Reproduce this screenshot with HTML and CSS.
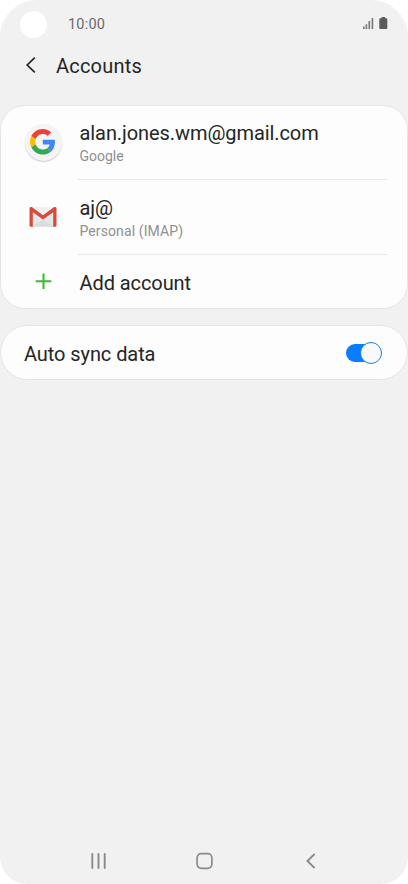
FILE: index.html
```html
<!DOCTYPE html>
<html lang="en">
<head>
<meta charset="utf-8">
<title>Accounts</title>
<link rel="stylesheet" href="styles.css">
</head>
<body>
<div class="phone">
  <div class="status">
    <span class="camera"></span>
    <span class="clock">10:00</span>
    <svg class="status-icons" width="28" height="16" viewBox="0 0 28 16">
      <g fill="#777"><rect x="1" y="10.5" width="1.6" height="2.5"/><rect x="3.6" y="8.3" width="1.6" height="4.7"/><rect x="6.5" y="5" width="1.6" height="8"/><rect x="9.6" y="2" width="1.6" height="11"/></g>
      <path d="M19.6 1h3.5v1.2h1.3q.9 0 .9.9v9q0 .9-.9.9h-6.2q-.9 0-.9-.9v-9q0-.9.9-.9h1.4z" fill="#5c5c5c"/>
    </svg>
  </div>
  <header class="header">
    <svg class="back" width="12" height="18" viewBox="0 0 12 18"><path d="M9.8 1.700 2.200 9l7.600 7.400" fill="none" stroke="#252525" stroke-width="1.700"/></svg>
    <h1 class="title">Accounts</h1>
  </header>
  <main>
    <section class="card accounts">
      <div class="row">
        <div class="icon"><div class="google">
          <svg width="25.500" height="25.500" viewBox="0 0 48 48"><path fill="#ea4335" d="M24 9.500c3.540 0 6.710 1.220 9.210 3.600l6.850-6.850C35.900 2.380 30.470 0 24 0 14.620 0 6.510 5.380 2.560 13.220l7.980 6.190C12.430 13.720 17.740 9.500 24 9.500z"/><path fill="#4285f4" d="M46.980 24.550c0-1.570-.15-3.090-.38-4.550H24v9.020h12.940c-.58 2.960-2.260 5.480-4.780 7.180l7.730 6c4.510-4.180 7.090-10.360 7.090-17.650z"/><path fill="#fbbc05" d="M10.530 28.590a14.500 14.500 0 0 1 0-9.180l-7.980-6.190a24 24 0 0 0 0 21.560z"/><path fill="#34a853" d="M24 48c6.480 0 11.930-2.130 15.890-5.810l-7.730-6c-2.150 1.450-4.920 2.300-8.160 2.300-6.260 0-11.570-4.220-13.470-9.910l-7.980 6.190C6.510 42.620 14.620 48 24 48z"/></svg>
        </div></div>
        <div class="body">
          <span class="label email">alan.jones.wm@gmail.com</span>
          <span class="sub google-sub">Google</span>
        </div>
      </div>
      <div class="row">
        <div class="icon">
          <svg width="28" height="22" viewBox="0 0 28 22">
            <path d="M2 1h24v19.800H2z" fill="#e7e7e7"/>
            <path d="M2 20.800 14 14l12 6.800z" fill="#dcdcdc"/>
            <path d="M2 1h24L14 11z" fill="#f0f0f0"/>
            <path d="M.5 2.200Q.5.900 2 .900h.8L14 9.200 25.200.900h.8q1.500 0 1.500 1.300v17.300q0 1.300-1.300 1.300h-2V6.200L14 13.400 3.800 6.200v14.600h-2Q.5 20.800.5 19.500z" fill="#d54b3d"/>
          </svg>
        </div>
        <div class="body">
          <span class="label aj">aj@</span>
          <span class="sub imap">Personal (IMAP)</span>
        </div>
      </div>
      <div class="row add">
        <div class="icon"><svg width="18" height="18" viewBox="0 0 18 18"><path d="M9.500 1.500v15.500M1.700 9.200h15.600" stroke="#3dba31" stroke-width="2"/></svg></div>
        <div class="body"><span class="label add-label">Add account</span></div>
      </div>
    </section>
    <section class="card sync">
      <span class="label sync-label">Auto sync data</span>
      <span class="toggle"><span class="knob"></span></span>
    </section>
  </main>
  <nav class="nav">
    <svg width="18" height="18" viewBox="0 0 18 18"><path d="M2.300 2v14M8.500 2v14M14.700 2v14" stroke="#8a8a8a" stroke-width="1.900" stroke-linecap="round"/></svg>
    <svg width="18" height="18" viewBox="0 0 18 18"><rect x="1.100" y="1.700" width="14.800" height="14.600" rx="4.200" fill="none" stroke="#8a8a8a" stroke-width="1.700"/></svg>
    <svg width="18" height="18" viewBox="0 0 18 18"><path d="M12.600 2 5.400 9l7.200 7" fill="none" stroke="#8a8a8a" stroke-width="1.800"/></svg>
  </nav>
</div>
</body>
</html>
```
FILE: styles.css
```css
* { box-sizing: border-box; }
body { margin: 0; background: #fff; font-family: Roboto, sans-serif; color: #252525; }
svg { display: block; }
.phone { width: 408px; height: 884px; background: #f1f1f1; border-radius: 37px 37px 27px 27px; display: flex; flex-direction: column; overflow: hidden; }
.status { height: 48px; display: flex; align-items: center; padding: 0 18px 0 20px; }
.camera { width: 27px; height: 27px; border-radius: 50%; background: #fff; }
.clock { margin: 1px 0 0 21px; font-size: 14.5px; line-height: 18px; letter-spacing: .2px; color: #6b6b6b; }
.status-icons { margin-left: auto; }
.header { height: 57px; display: flex; align-items: flex-start; padding: 5px 0 0 25px; }
.back { margin-top: 3px; }
.title { margin: 0 0 0 19px; font-size: 20px; line-height: 26px; font-weight: 400; letter-spacing: .2px; }
.card { background: #fdfdfd; border: 1px solid #e5e5e5; }
.accounts { height: 204px; border-radius: 25px; padding-right: 19px; }
.row { display: flex; height: 75px; }
.row:first-child { height: 74px; }
.row.add { height: 53px; }
.icon { width: 76px; padding: 0 0 2px 8px; display: flex; align-items: center; justify-content: center; }
.body { flex: 1; border-bottom: 1px solid #e9e9e9; display: flex; flex-direction: column; padding: 16px 0 0 2.500px; }
.row:first-child .body { padding-top: 15px; }
.add .body { border: 0; }
.label { font-size: 20px; line-height: 24px; white-space: nowrap; letter-spacing: -.08px; }
.sub { font-size: 14px; line-height: 18px; margin-top: 2px; color: #909090; }
.imap { letter-spacing: .1px; }
.google { width: 37px; height: 37px; border-radius: 50%; background: #f4f4f4; box-shadow: 0 1px 1px #ccc; display: flex; align-items: center; justify-content: center; }
.sync { margin-top: 16px; height: 55px; border-radius: 28px; display: flex; align-items: center; justify-content: space-between; padding: 0 25px 0 23px; }
.sync-label { padding-top: 2px; }
.toggle { width: 36px; height: 18px; border-radius: 9px; background: linear-gradient(90deg, #0a7cff 70%, transparent 70%); display: flex; align-items: center; justify-content: flex-end; }
.knob { width: 22px; height: 22px; flex: none; border-radius: 50%; background: #fafafa; border: 1px solid #1a80e8; }
.nav { margin-top: auto; height: 46px; display: flex; justify-content: space-between; align-items: center; padding: 0 88px 0 90px; }
```
